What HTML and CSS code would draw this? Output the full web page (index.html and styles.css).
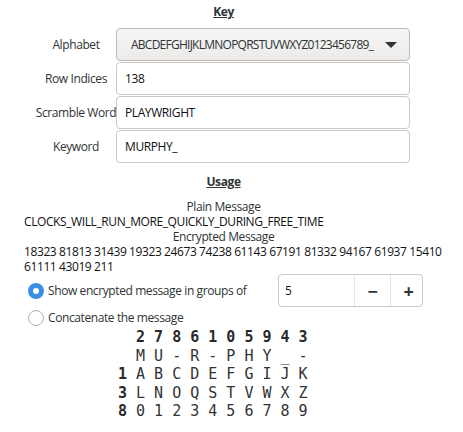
FILE: index.html
```html
<!DOCTYPE html>
<html>
<head>
<meta charset="utf-8">
<link rel="stylesheet" href="styles.css">
</head>
<body>
<div class="app">
  <div class="title">Key</div>
  <div class="form">
    <div class="label">Alphabet</div>
    <div class="combo"><span class="combo-text">ABCDEFGHIJKLMNOPQRSTUVWXYZ0123456789_</span><span class="arrow"></span></div>
    <div class="label">Row Indices</div>
    <div class="entry">138</div>
    <div class="label">Scramble Word</div>
    <div class="entry">PLAYWRIGHT</div>
    <div class="label">Keyword</div>
    <div class="entry">MURPHY_</div>
  </div>
  <div class="title usage">Usage</div>
  <div class="msg-title">Plain Message</div>
  <div class="msg">CLOCKS_WILL_RUN_MORE_QUICKLY_DURING_FREE_TIME</div>
  <div class="msg-title">Encrypted Message</div>
  <div class="msg">18323 81813 31439 19323 24673 74238 61143 67191 81332 94167 61937 15410<br>61111 43019 211</div>
  <div class="options">
    <div class="opt-row">
      <span class="radio checked"></span>
      <span class="opt-label">Show encrypted message in groups of</span>
      <div class="spin">
        <span class="spin-entry">5</span>
        <span class="spin-btn">−</span>
        <span class="spin-btn">+</span>
      </div>
    </div>
    <div class="opt-row second">
      <span class="radio"></span>
      <span class="opt-label">Concatenate the message</span>
    </div>
  </div>
  <pre class="grid"><b>  2 7 8 6 1 0 5 9 4 3</b>
  M U - R - P H Y _ -
<b>1</b> A B C D E F G I J K
<b>3</b> L N O Q S T V W X Z
<b>8</b> 0 1 2 3 4 5 6 7 8 9</pre>
</div>
</body>
</html>
```

FILE: styles.css
```css
html, body {
  margin: 0;
  padding: 0;
  background: #ffffff;
}
.app {
  width: 447px;
  padding-top: 4px;
  font-family: "Open Sans", "Noto Sans", sans-serif;
  font-size: 12px;
  letter-spacing: -0.4px;
  color: #1a1a1a;
}
.title {
  text-align: center;
  font-weight: bold;
  text-decoration: underline;
  line-height: 15px;
  color: #2e3436;
}
.form {
  margin-top: 9px;
  margin-left: 36px;
  display: grid;
  grid-template-columns: 80px 294px;
  row-gap: 1px;
}
.label {
  display: flex;
  align-items: center;
  justify-content: center;
  color: #2e3436;
  height: 33px;
  white-space: nowrap;
}
.combo {
  box-sizing: border-box;
  height: 33px;
  border: 1px solid #bfbab5;
  border-radius: 4px;
  background: linear-gradient(#f6f5f4, #edebe9);
  display: flex;
  align-items: center;
  padding-left: 14px;
  padding-right: 12px;
  color: #2e3436;
}
.combo-text {
  flex: 1;
  white-space: nowrap;
  letter-spacing: -0.75px;
}
.arrow {
  flex: none;
  width: 0;
  height: 0;
  margin-left: 4px;
  border-left: 6px solid transparent;
  border-right: 6px solid transparent;
  border-top: 6px solid #2e3436;
}
.entry {
  box-sizing: border-box;
  height: 33px;
  border: 1px solid #cdc7c2;
  border-radius: 4px;
  background: #ffffff;
  display: flex;
  align-items: center;
  padding-left: 8px;
  color: #111;
}
.usage {
  margin-top: 11px;
}
.msg-title {
  margin-top: 0;
  text-align: center;
  line-height: 15px;
  color: #2e3436;
}
.usage + .msg-title {
  margin-top: 10px;
}
.msg {
  padding-left: 24px;
  line-height: 15px;
  color: #111;
  white-space: nowrap;
}
.options {
  padding-left: 28px;
}
.opt-row {
  display: flex;
  align-items: center;
  height: 33px;
}
.opt-row.second {
  height: 21px;
}
.radio {
  box-sizing: border-box;
  width: 16px;
  height: 16px;
  border-radius: 50%;
  border: 1px solid #b6b0aa;
  background: #fff;
  flex: none;
}
.radio.checked {
  border: 5px solid #3b8ee3;
  background: #fff;
}
.opt-label {
  margin-left: 4px;
  color: #2e3436;
  width: 230px;
  white-space: nowrap;
}
.spin {
  box-sizing: border-box;
  height: 33px;
  width: 145px;
  border: 1px solid #cdc7c2;
  border-radius: 4px;
  display: flex;
  background: #fff;
  overflow: hidden;
}
.spin-entry {
  flex: none;
  width: 75px;
  display: flex;
  align-items: center;
  padding-left: 6px;
  box-sizing: border-box;
  color: #111;
}
.spin-btn {
  flex: none;
  width: 35px;
  border-left: 1px solid #e6e3e0;
  display: flex;
  align-items: center;
  justify-content: center;
  font-size: 18px;
  font-weight: bold;
  color: #2e3436;
}
.grid {
  margin: 0;
  padding-left: 118px;
  font-family: "DejaVu Sans Mono", monospace;
  font-size: 15px;
  letter-spacing: 0;
  line-height: 18.6px;
  color: #333;
}
.grid b {
  font-weight: bold;
  color: #2a2a2a;
}
```
